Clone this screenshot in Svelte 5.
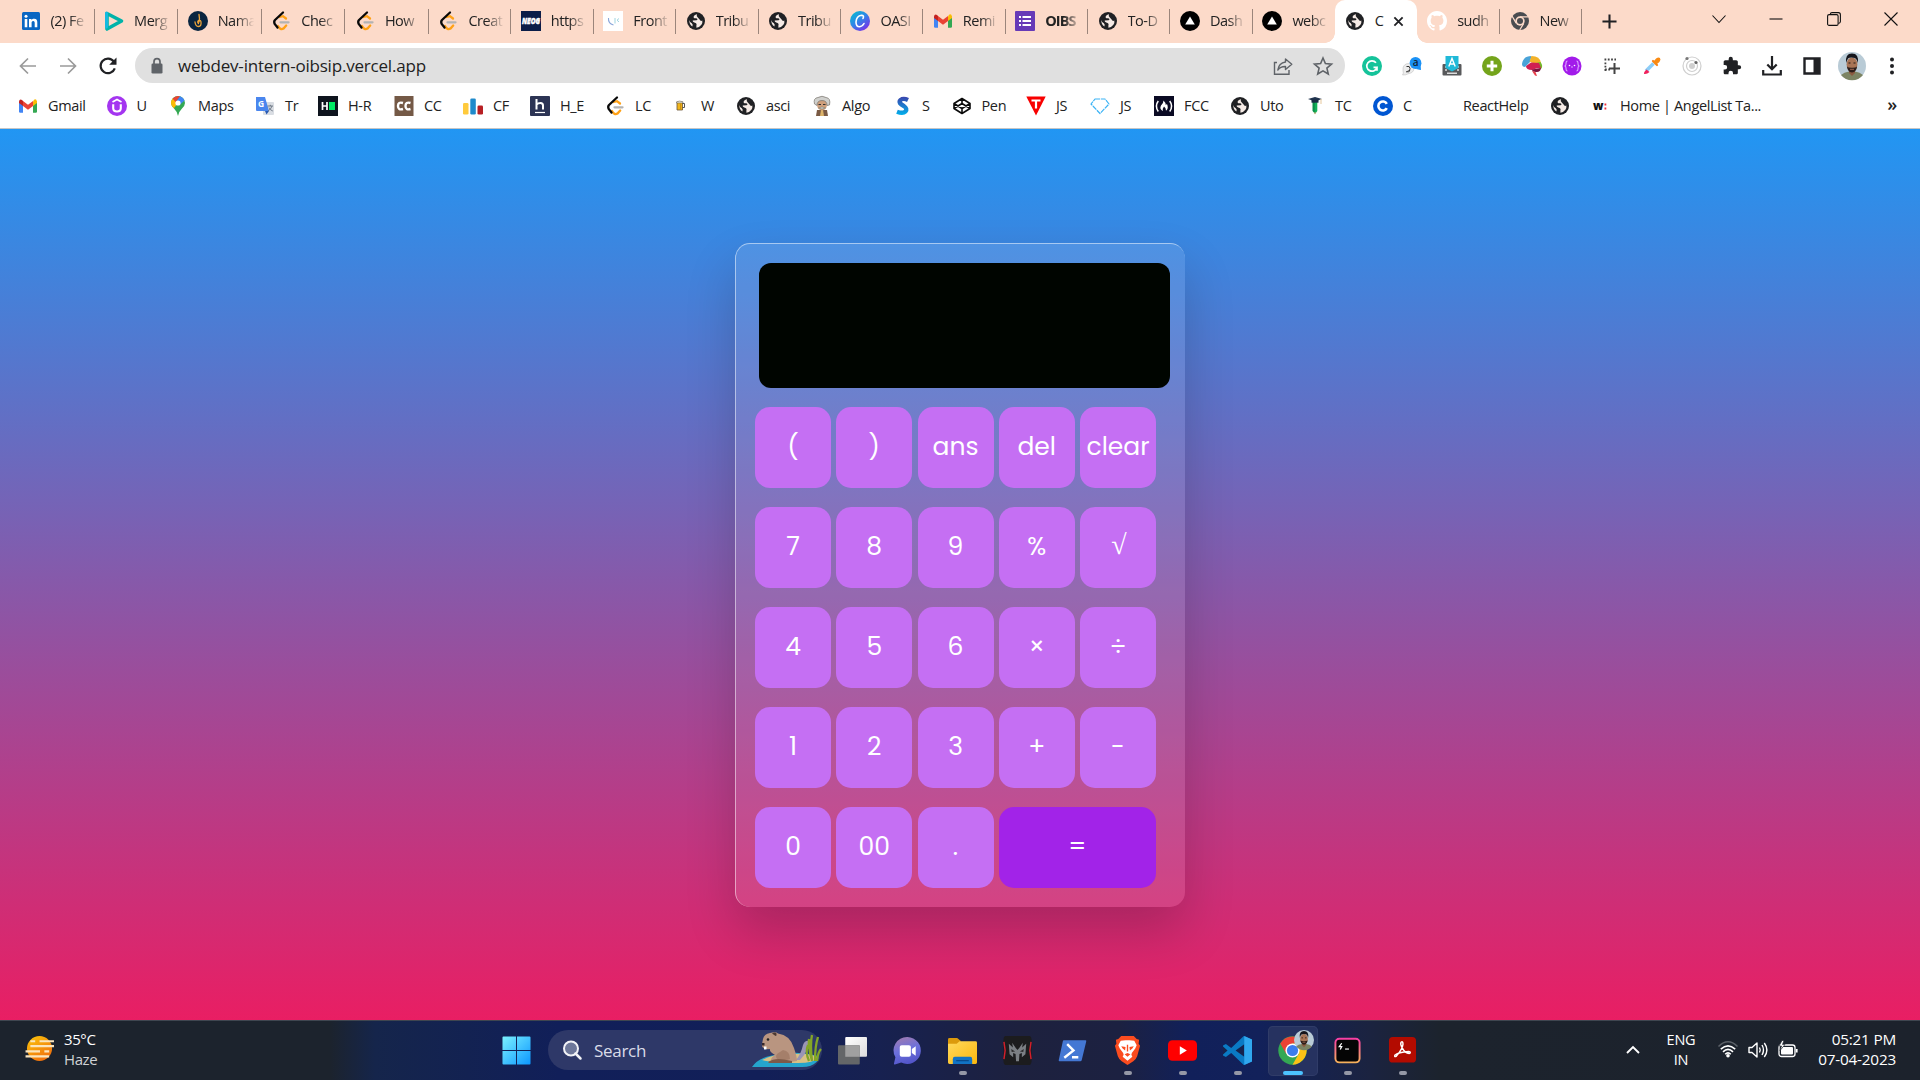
<script>
  const tabs = [
    ['linkedin', '(2) Fe'], ['play', 'Merg'], ['naam', 'Nama'], ['leet', 'Chec'], ['leet', 'How'],
    ['leet', 'Creat'], ['neog', 'https'], ['front', 'Front'], ['globe', 'Tribu'], ['globe', 'Tribu'],
    ['canva', 'OASI'], ['gmail', 'Remi'], ['forms', 'OIBS'], ['globe', 'To-D'], ['vercel', 'Dash'],
    ['vercel', 'webc'], ['globe', 'C'], ['github', 'sudh'], ['chromeMono', 'New']
  ];
  const activeTab = 16;

  // icon, label, width of the whole bookmark slot
  const bookmarks = [
    ['gmail', 'Gmail', 88.5], ['upwork', 'U', 61.5], ['maps', 'Maps', 87], ['translate', 'Tr', 63],
    ['hr', 'H-R', 76], ['cc', 'CC', 69], ['cf', 'CF', 67], ['he', 'H_E', 75], ['leet', 'LC', 66],
    ['beer', 'W', 65], ['globe', 'asci', 76], ['algo', 'Algo', 80], ['scaler', 'S', 59.5],
    ['codepen', 'Pen', 74.5], ['tjs', 'JS', 64], ['gem', 'JS', 64], ['fcc', 'FCC', 76],
    ['globe', 'Uto', 75], ['tc', 'TC', 68], ['coursera', 'C', 60], ['none', 'ReactHelp', 117],
    ['globe', '', 40], ['wf', 'Home | AngelList Ta...', 200]
  ];

  const extensions = [
    'grammarly', 'lang', 'keyboard', 'plusGreen', 'brain', 'braces', 'capture', 'picker',
    'orbit', 'puzzle', 'download', 'panel', 'avatar', 'dots'
  ];

  const keys = [
    '(', ')', 'ans', 'del', 'clear',
    '7', '8', '9', '%', '√',
    '4', '5', '6', '×', '÷',
    '1', '2', '3', '+', '-',
    '0', '00', '.', '='
  ];

  // icon, has running indicator
  const apps = [
    ['taskview', false], ['chat', false], ['folder', true], ['predator', false], ['powershell', false],
    ['brave', true], ['youtube', true], ['vscode', true], ['chrome', true], ['warp', true], ['acrobat', true]
  ];

  let display = $state('');
  function press(k) {
    if (k === 'clear') display = '';
    else if (k === 'del') display = display.slice(0, -1);
    else if (k !== '=' && k !== 'ans') display += k;
  }
</script>

{#snippet face()}
  <circle cx="14" cy="14" r="14" fill="#b9cbd6" />
  <path d="M3 23 Q6 20 11 19.5 H17 Q22 20 25 23 A14 14 0 0 1 3 23Z" fill="#7c8463" />
  <path d="M11 17h6v4l-3 3-3-3z" fill="#8a5a40" />
  <ellipse cx="14" cy="12.5" rx="5.4" ry="7" fill="#a87455" />
  <path d="M8.2 11 Q6.800 1.500 14 1.500 Q21.200 1.500 19.800 11 Q19 7 17 6 Q12 5 10 6.500 Q9 8 8.200 11Z" fill="#15151b" />
  <path d="M9 14.500 Q10.500 16 14 15.800 Q17.500 16 19 14.500 Q18.500 20 14 20.500 Q9.500 20 9 14.500Z" fill="#2c1e1a" />
  <path d="M12 17.300h4" stroke="#9c6450" stroke-width="1" />
  <path d="M10.500 11h2M15.500 11h2" stroke="#221815" stroke-width="1.200" />
{/snippet}

{#snippet icon(name)}
  {#if name === 'linkedin'}
    <svg viewBox="0 0 20 20"><rect x="1" y="1" width="18" height="18" rx="1.500" fill="#0a66c2" /><path d="M3.700 8h2.600v8.300H3.700zM8 8h2.500v1.200c.5-.9 1.500-1.400 2.700-1.400 2.500 0 3.100 1.600 3.100 3.800v4.700h-2.600v-4.200c0-1.100-.2-2.200-1.500-2.200s-1.600 1-1.600 2.100v4.300H8z" fill="#fff" /><circle cx="5" cy="5.200" r="1.500" fill="#fff" /></svg>
  {:else if name === 'play'}
    <svg viewBox="0 0 20 20"><path d="M3 2.500 L17.500 10 L3 18Z" fill="#fcdac9" stroke="#00b3a9" stroke-width="3.600" stroke-linejoin="round" /><path d="M2.500 2v14" stroke="#14b9e0" stroke-width="3" stroke-linecap="round" /></svg>
  {:else if name === 'naam'}
    <svg viewBox="0 0 20 20"><circle cx="10" cy="10" r="10" fill="#0a2540" /><path d="M11 3.500q1 5 0 7.500M7 11q.5 4.500 3.500 4.500T13 11q-.2-2-2.500-1.500Q9 11 10.500 12.500" stroke="#f0a63a" stroke-width="1.300" fill="none" stroke-linecap="round" /></svg>
  {:else if name === 'leet'}
    <svg viewBox="0 0 20 20"><g fill="none" stroke-linecap="round" stroke-width="2.300"><path d="M8.500 6 L12 5.200 L15 7.500M7 15 Q9.500 19.500 12.500 17.500 L15.200 14.500" stroke="#ffa116" /><path d="M9.500 11.300h8" stroke="#b3b3b3" /><path d="M12 1.500 L4 9 Q2.600 10.500 3.700 13 L6.500 16.500" stroke="#090909" /></g></svg>
  {:else if name === 'neog'}
    <svg viewBox="0 0 20 20"><rect width="20" height="20" fill="#0b1d48" /><text x="10" y="13.300" text-anchor="middle" textLength="18" font-size="9" font-weight="900" font-style="italic" fill="#fff" stroke="#fff" stroke-width=".5" lengthAdjust="spacingAndGlyphs">NEOG</text></svg>
  {:else if name === 'front'}
    <svg viewBox="0 0 20 20"><rect width="20" height="20" fill="#fff" /><path d="M5.500 7q-.5 5.500 5 7" stroke="#8aa6da" stroke-width="1.100" fill="none" /><path d="M12 12.500V7M16 7.500l-2 1.700 2 1.700" stroke="#9fd4e0" stroke-width="1" fill="none" /></svg>
  {:else if name === 'globe'}
    <svg viewBox="0 0 20 20"><circle cx="10" cy="10" r="9" fill="#202124" /><path d="M11 3.200 Q7.500 4 7.600 6.400 Q8.300 7.600 10.300 7.200 Q12.500 8.200 10.600 9.300 L6.700 9.600 Q6.600 11.600 9.600 12 Q11.200 12.700 10.400 14.200 L10.400 16.700 Q13.500 16.500 15.400 13.800 Q16.800 11.600 16.300 9.600 Q14.500 10.500 13.600 8.500 L11.600 6.300 Q10.200 5 11 3.200Z M3.400 9 Q3 13 6.300 15.500 Q7.400 13.600 5.800 12.300 Q3.700 11.200 3.400 9Z" fill="#f6ebe6" /></svg>
  {:else if name === 'canva'}
    <svg viewBox="0 0 20 20"><defs><linearGradient id="cv" x1="0" y1="0" x2=".8" y2="1"><stop stop-color="#00c4cc" /><stop offset=".5" stop-color="#2f86e8" /><stop offset="1" stop-color="#7d2ae8" /></linearGradient></defs><circle cx="10" cy="10" r="10" fill="url(#cv)" /><path d="M13 7.500Q14.500 4.300 11.500 4.300Q6.500 5 6 11Q6 15.700 9.500 15.700Q12.500 15.400 14 12.500" stroke="#fff" stroke-width="1.600" fill="none" stroke-linecap="round" /></svg>
  {:else if name === 'gmail'}
    <svg viewBox="0 0 20 20"><path d="M1 5v10.500q0 1.200 1.200 1.200H5V9z" fill="#4285f4" /><path d="M19 5v10.500q0 1.200-1.200 1.200H15V9z" fill="#34a853" /><path d="M15 5.500V10l4-3V5.500q-.8-3.200-3-1.700z" fill="#fbbc04" /><path d="M5 10V5l5 3.800L15 5v5l-5 3.800z" fill="#ea4335" /><path d="M1 5.500V7l4 3V5L4 3.900Q1.500 2.500 1 5.500z" fill="#c5221f" /></svg>
  {:else if name === 'forms'}
    <svg viewBox="0 0 20 20"><rect width="20" height="20" rx="1" fill="#673ab7" /><path d="M4 6h2M4 10h2M4 14h2M7.500 6H16M7.500 10H16M7.500 14H16" stroke="#fff" stroke-width="2" /></svg>
  {:else if name === 'vercel'}
    <svg viewBox="0 0 20 20"><circle cx="10" cy="10" r="10" fill="#000" /><path d="M10 5.500 L14.800 13.600H5.200Z" fill="#fff" /></svg>
  {:else if name === 'github'}
    <svg viewBox="0 0 16 16"><path fill="#fff" d="M8 0C3.580 0 0 3.580 0 8c0 3.540 2.290 6.530 5.470 7.590.4.070.55-.17.55-.38 0-.19-.01-.82-.01-1.490-2.010.37-2.530-.49-2.690-.94-.09-.23-.48-.94-.82-1.130-.28-.15-.68-.52-.01-.53.63-.01 1.080.58 1.230.82.72 1.210 1.870.87 2.330.66.07-.52.28-.87.51-1.070-1.780-.2-3.640-.89-3.640-3.950 0-.87.31-1.590.82-2.150-.08-.2-.36-1.020.08-2.120 0 0 .67-.21 2.200.82.64-.18 1.320-.27 2-.27s1.360.09 2 .27c1.530-1.040 2.200-.82 2.200-.82.44 1.100.16 1.920.08 2.120.51.56.82 1.270.82 2.150 0 3.070-1.870 3.750-3.650 3.950.29.25.54.73.54 1.480 0 1.070-.01 1.930-.01 2.200 0 .21.15.46.55.38A8.010 8.010 0 0 0 16 8c0-4.420-3.580-8-8-8z" /></svg>
  {:else if name === 'chromeMono'}
    <svg viewBox="0 0 20 20"><circle cx="10" cy="10" r="9" fill="#4a4c50" /><circle cx="10" cy="10" r="4.700" fill="#fcdac9" /><circle cx="10" cy="10" r="3" fill="#4a4c50" /><path d="M10 5.800h8.300M6.200 12.100 2 5M13.700 12.300 9.700 19" stroke="#fcdac9" stroke-width="1.300" /></svg>
  {:else if name === 'upwork'}
    <svg viewBox="0 0 20 20"><circle cx="10" cy="10" r="10" fill="#a435f0" /><path d="M6.200 8.300v4Q6.200 15.500 10 15.500T13.800 12.300V8.300" stroke="#fff" stroke-width="2.100" fill="none" /><path d="M5.500 6 L10 3.500 L14.500 6" stroke="#fff" stroke-width="1.700" fill="none" /></svg>
  {:else if name === 'maps'}
    <svg viewBox="0 0 20 20"><path d="M10 20Q9.200 15.500 6 12.500Q3 9.500 3 7A7 7 0 0 1 17 7Q17 9.500 14 12.500Q10.800 15.500 10 20Z" fill="#34a853" /><path d="M4.500 10.800Q3 9 3 7Q3 4.500 4.700 2.500L10 7L5.800 12.300Z" fill="#fbbc04" /><path d="M4.600 2.600Q8 -1 12.200.4L7.500 6Z" fill="#ea4335" /><path d="M12 .3Q15.500 1.500 16.500 4.500L11 9.500L8.500 5Z" fill="#4285f4" /><circle cx="10" cy="7" r="2.600" fill="#fff" /></svg>
  {:else if name === 'translate'}
    <svg viewBox="0 0 20 20"><rect x="8" y="6" width="11" height="13" rx="1" fill="#d9dde3" /><path d="M1 1h9l4 14H2q-1 0-1-1z" fill="#4a86ee" /><path d="M10 15h4l-2.500 3.500z" fill="#2758b0" /><text x="3" y="11" font-size="8.500" font-weight="700" fill="#fff">G</text><path d="M12.500 10h5.500M15.300 8.800v1.200M17 10q-.7 3-4 5M14 11.500q1 2.500 3.800 3.500" stroke="#66727f" fill="none" stroke-width=".9" /></svg>
  {:else if name === 'hr'}
    <svg viewBox="0 0 20 20"><rect width="20" height="20" fill="#0e141e" /><path d="M4.500 6v8M9 6v8M4.500 10H9" stroke="#fff" stroke-width="1.700" /><rect x="11" y="6" width="6" height="8" fill="#00ea64" /></svg>
  {:else if name === 'cc'}
    <svg viewBox="0 0 20 20"><rect x=".5" width="19" height="20" fill="#745946" /><path d="M9 7Q4 5.500 4 10T9 13M16.500 7Q11.500 5.500 11.500 10T16.500 13" stroke="#fff" stroke-width="2.400" fill="none" /></svg>
  {:else if name === 'cf'}
    <svg viewBox="0 0 20 20"><rect y="7" width="5.500" height="11.500" rx="1.300" fill="#ffca3c" /><rect x="7.300" y="2.500" width="5.500" height="16" rx="1.300" fill="#1f8acb" /><rect x="14.500" y="9.500" width="5.500" height="9" rx="1.300" fill="#b71f24" /></svg>
  {:else if name === 'he'}
    <svg viewBox="0 0 20 20"><rect width="20" height="20" rx="1" fill="#2c3454" /><path d="M6.500 3v10.500M6.500 8.700Q8 7 10.500 7T13 9.500V13.500" stroke="#fff" stroke-width="2" fill="none" /><path d="M5 16.500h10" stroke="#fff" stroke-width="1.200" /></svg>
  {:else if name === 'beer'}
    <svg viewBox="0 0 20 20"><path d="M6 6h5.500v8H6z" fill="#f1b61c" stroke="#6d5637" stroke-width=".8" /><path d="M11.500 7.500h2v4h-2" stroke="#555" fill="none" /><path d="M5.500 5.800q3-1.500 6.500 0v1.200h-6.500z" fill="#eee7d0" stroke="#555" stroke-width=".5" /><path d="M9.700 7.500v6" stroke="#c88d12" /></svg>
  {:else if name === 'algo'}
    <svg viewBox="0 0 20 20"><path d="M5 14h10l1 6H4z" fill="#7a5a44" /><path d="M9 14h2l1 6H8z" fill="#ddb46a" /><ellipse cx="10" cy="8.500" rx="5" ry="6" fill="#cf9f7c" /><path d="M2.500 8Q1 2 6 1.500Q10-1 14 1.500Q19 2 17.500 9L15 9.500Q15 4.500 10 4.500T5 9.500Z" fill="#d0d0cd" stroke="#77736c" stroke-width=".7" /><path d="M6.500 8.500h2.500M11 8.500h2.500" stroke="#333" /><path d="M6.500 12Q10 10 13.500 12Q10 14 6.500 12Z" fill="#ddd" stroke="#665" stroke-width=".5" /></svg>
  {:else if name === 'scaler'}
    <svg viewBox="0 0 20 20"><defs><linearGradient id="sc" gradientUnits="userSpaceOnUse" x1="0" y1="1" x2="0" y2="19"><stop stop-color="#3946ae" /><stop offset="1" stop-color="#00b0ec" /></linearGradient></defs><path d="M16 4Q12.500 2.300 9.800 3.200Q6.600 4.500 8 7.100Q9 8.500 11.800 10Q15.800 12.800 13.400 15.400Q11 18 5 15.700" stroke="url(#sc)" stroke-width="4.400" fill="none" /></svg>
  {:else if name === 'codepen'}
    <svg viewBox="0 0 20 20"><path d="M10 2.500 18 7.500V12.500L10 17.500 2 12.500V7.500ZM10 2.500V7.500M10 12.500V17.500M2 7.500 10 12.500 18 7.500M2 12.500 10 7.500 18 12.500" stroke="#0b0b0b" stroke-width="1.600" fill="none" stroke-linejoin="round" /></svg>
  {:else if name === 'tjs'}
    <svg viewBox="0 0 20 20"><path d="M.3.500H19.700L10 19.500Z" fill="#f80000" /><path d="M5.500 4.500h9M10 4.500V12.500" stroke="#fff" stroke-width="2.200" /></svg>
  {:else if name === 'gem'}
    <svg viewBox="0 0 20 20"><path d="M5 3H15L19 8 10 17.500 1 8Z" stroke="#3bb3f5" stroke-width="1.200" fill="none" stroke-linejoin="round" stroke-dasharray="5 .8" /></svg>
  {:else if name === 'fcc'}
    <svg viewBox="0 0 20 20"><rect width="20" height="20" fill="#0a0a23" /><path d="M4.300 5Q.5 10 4.300 15.500M15.700 5Q19.500 10 15.700 15.500" stroke="#fff" stroke-width="1.500" fill="none" /><path d="M9.500 4.500Q12 7 11.800 9L13 8Q15 12.500 12 14.800Q12 12 10 10.500Q8 13 9 15Q5 13 7 9.500Q9.500 7.500 9.500 4.500Z" fill="#fff" /></svg>
  {:else if name === 'tc'}
    <svg viewBox="0 0 20 20"><path d="M7.700 6h4.600v9l-2.300 3-2.300-3z" fill="#12b259" /><path d="M7.700 6h2v10.500l-2-1.500z" fill="#0c8c49" /><path d="M9 16.500h2L10 18.500z" fill="#e2a26e" /><path d="M3 3 10 1 17 3 10 5.500Z" fill="#20344f" /><path d="M6.500 3.500h7v3.200h-7z" fill="#1a2c44" /><path d="M16 3v5" stroke="#e6c79b" /></svg>
  {:else if name === 'coursera'}
    <svg viewBox="0 0 20 20"><circle cx="10" cy="10" r="10" fill="#0056d2" /><path d="M13.800 7.800A4.500 4.500 0 1 0 13.800 12.200" stroke="#fff" stroke-width="2.600" fill="none" /></svg>
  {:else if name === 'wf'}
    <svg viewBox="0 0 20 20"><text x="3" y="13.500" font-size="11.500" font-weight="800" fill="#111">w</text><path d="M14.500 7.500h1.800v2h-1.800zM14.500 11.500h1.800v2h-1.800z" fill="#ec2e3a" /></svg>
  {:else if name === 'grammarly'}
    <svg viewBox="0 0 20 20"><circle cx="10" cy="10" r="10" fill="#15c39a" /><path d="M14 6.700A5.200 5.200 0 1 0 15 11.300H11.500M15 11v3.800" stroke="#fff" stroke-width="1.700" fill="none" /></svg>
  {:else if name === 'lang'}
    <svg viewBox="0 0 20 20"><path d="M1 12a5.500 5 0 1 1 6 5.500Q3 19.500.5 19Q2 17 1 15z" fill="#ececec" stroke="#aaa" stroke-width=".4" /><path d="M4.500 10.500Q8 9.500 8 12.500T6 16.500M7.500 14.500 4 16" stroke="#333" stroke-width="1" fill="none" /><circle cx="13.500" cy="7" r="5.900" fill="#1a91f5" /><path d="M14 13Q18 14 19 14Q18 10 19.500 7z" fill="#1a91f5" /><text x="10.700" y="10.300" font-size="10" font-weight="600" fill="#123">a</text></svg>
  {:else if name === 'keyboard'}
    <svg viewBox="0 0 20 20"><rect x=".5" y="8" width="19" height="11.500" rx="1" fill="#58595b" /><path d="M3 11h2M3 14h2M15 11h2M15 14h2M5 17.300h10" stroke="#ddd" stroke-width="1.500" /><path d="M3.500 0h13v12L10 15.500 3.500 12Z" fill="#20b9d8" /><path d="M6.800 10.500 10 2.500l3.200 8M8 8h4" stroke="#fff" stroke-width="1.400" fill="none" /></svg>
  {:else if name === 'plusGreen'}
    <svg viewBox="0 0 20 20"><circle cx="10" cy="10" r="10" fill="#74a41b" /><path d="M10 4.800v10.400M4.800 10h10.400" stroke="#fff" stroke-width="3" /></svg>
  {:else if name === 'brain'}
    <svg viewBox="0 0 20 20"><path d="M0 8Q1 0 9.500 0L8 6 3 11Q0 11 0 8Z" fill="#4aa3d8" /><path d="M9.500 0Q18 0 19 7L13 8 7.500 5.500Z" fill="#f3b229" /><path d="M18.500 6Q21.500 10 19 13L14 11 14 7Z" fill="#74b82a" /><path d="M4 10 9 6.500 17 7 19 12Q14 12 10 14Q4 14 4 10Z" fill="#d01f52" /><path d="M10 13.500 19 12Q18.500 16.500 14 16Q10 16 10 13.500Z" fill="#7d123d" /><path d="M10 15 13.500 16 15 20 13 19.500Z" fill="#e8404a" /></svg>
  {:else if name === 'braces'}
    <svg viewBox="0 0 20 20"><circle cx="10" cy="10" r="9.500" fill="#a21bea" /><path d="M5.500 5q-1.500 0-1.500 2.500T2.500 10q1.500 0 1.500 2.500T5.500 15M14.500 5q1.500 0 1.500 2.500T17.500 10q-1.500 0-1.500 2.500T14.500 15M9 11h2" stroke="#dca5ff" stroke-width="1.100" fill="none" /><circle cx="7.500" cy="9.500" r=".8" fill="#fff" /><circle cx="12.500" cy="9.500" r=".8" fill="#fff" /></svg>
  {:else if name === 'capture'}
    <svg viewBox="0 0 20 20"><path d="M2.500 3.500h11.500M3.400 6.500v9M3 13.500h5" stroke="#444" stroke-width="1.800" stroke-dasharray="1.800 1.500" fill="none" /><path d="M12.500 7v11M7 12.500h11" stroke="#444" stroke-width="2" /></svg>
  {:else if name === 'picker'}
    <svg viewBox="0 0 20 20"><path d="M4 15 11.500 7.500" stroke="#8ccdf7" stroke-width="3.600" /><path d="M2 18Q2 15.500 4.500 13.500L7.500 16Q5 18.500 2 18Z" fill="#f0205b" /><path d="M11 5 15 9" stroke="#f78318" stroke-width="2.200" stroke-linecap="round" /><path d="M12 6 14.500 3Q16.500 1.500 17.500 2.500T17 5.500L14 8Z" stroke="#f98a12" stroke-width="1.200" fill="#f98a12" /></svg>
  {:else if name === 'orbit'}
    <svg viewBox="0 0 20 20"><g fill="none" stroke="#cfcfcf" stroke-width="1.200"><circle cx="10" cy="10" r="9" /><circle cx="10" cy="10" r="5.500" /></g><circle cx="10" cy="10" r="3" fill="#d0d0d0" /><circle cx="5" cy="2.500" r="1.600" fill="#777" /><circle cx="14" cy="6.500" r="1.600" fill="#666" /></svg>
  {:else if name === 'puzzle'}
    <svg viewBox="0 0 24 24"><path fill="#202124" d="M20.500 11H19V7c0-1.100-.9-2-2-2h-4V3.500a2.500 2.500 0 0 0-5 0V5H4c-1.100 0-2 .9-2 2v3.800h1.500a2.700 2.700 0 0 1 0 5.400H2V20c0 1.100.9 2 2 2h3.800v-1.500a2.700 2.700 0 0 1 5.400 0V22H17c1.100 0 2-.9 2-2v-4h1.500a2.500 2.500 0 0 0 0-5z" /></svg>
  {:else if name === 'download'}
    <svg viewBox="0 0 20 20"><path d="M10 0v13M5.300 8.500 10 13.200l4.700-4.700M1.200 14v4.500h17.600V14" stroke="#202124" stroke-width="2.200" fill="none" /></svg>
  {:else if name === 'panel'}
    <svg viewBox="0 0 20 20"><path d="M2.500 2.500h15v15h-15z" stroke="#202124" stroke-width="2.400" fill="none" /><path d="M11.500 2h6.500v16h-6.500z" fill="#202124" /></svg>
  {:else if name === 'avatar'}
    <svg class="avatar" viewBox="0 0 28 28">{@render face()}</svg>
  {:else if name === 'dots'}
    <svg viewBox="0 0 20 20"><g fill="#202124"><circle cx="10" cy="3.500" r="2" /><circle cx="10" cy="10" r="2" /><circle cx="10" cy="16.500" r="2" /></g></svg>
  {:else if name === 'back'}
    <svg viewBox="0 0 20 20"><path d="M18 10H2.500M10 2.500 2.500 10l7.500 7.500" stroke="#9a9a9a" stroke-width="1.700" fill="none" /></svg>
  {:else if name === 'forward'}
    <svg viewBox="0 0 20 20"><path d="M2 10h15.500M10 2.500l7.500 7.500-7.500 7.500" stroke="#9a9a9a" stroke-width="1.700" fill="none" /></svg>
  {:else if name === 'reload'}
    <svg viewBox="0 0 20 20"><path d="M16.800 12.300A7.300 7.300 0 1 1 15.800 5.500" stroke="#202124" stroke-width="2.200" fill="none" /><path d="M18.500 1.500v7.300h-7.300z" fill="#202124" /></svg>
  {:else if name === 'lock'}
    <svg viewBox="0 0 20 20"><rect x="4.500" y="7.500" width="11" height="10" rx="1.300" fill="#5f6368" /><path d="M7 8V5.700a3 3 0 0 1 6 0V8" stroke="#5f6368" stroke-width="1.700" fill="none" /></svg>
  {:else if name === 'share'}
    <svg viewBox="0 0 20 20"><path d="M4 6.500H1.500V18.300H16V14" stroke="#5f6368" stroke-width="1.400" fill="none" /><path d="M12.500 3 18.800 8.300 12.500 13.500V10.500Q7.500 10.300 4.800 14Q5.800 7 12.500 6Z" stroke="#5f6368" stroke-width="1.400" fill="none" stroke-linejoin="round" /></svg>
  {:else if name === 'star'}
    <svg viewBox="0 0 20 20"><path d="M10 2 12.400 7.600 18.500 8.100 13.900 12.100 15.300 18 10 14.900 4.700 18 6.100 12.100 1.500 8.100 7.600 7.600Z" stroke="#5f6368" stroke-width="1.600" fill="none" /></svg>
  {:else if name === 'taskview'}
    <svg viewBox="0 0 30 30"><defs><linearGradient id="tv" x1="0" y1="0" x2="1" y2="1"><stop stop-color="#fff" /><stop offset="1" stop-color="#dcdcdc" /></linearGradient></defs><rect x="7.500" y="1" width="22.500" height="20.500" rx="1" fill="url(#tv)" /><rect x="0" y="9.500" width="22.500" height="20" rx="1" fill="#646668" /><path d="M7.500 9.500h15v12h-15z" fill="#a0a0a0" /></svg>
  {:else if name === 'chat'}
    <svg viewBox="0 0 30 30"><defs><linearGradient id="ct" x1=".2" y1="0" x2=".5" y2="1"><stop stop-color="#a07bb0" /><stop offset=".5" stop-color="#6b70dc" /><stop offset="1" stop-color="#5254c8" /></linearGradient></defs><path d="M15 1a14 14 0 1 1-6.500 26.500L2 29.500Q.8 29.700 1 28.500L2.500 22A14 14 0 0 1 15 1Z" fill="url(#ct)" /><rect x="7" y="9.500" width="11.500" height="12" rx="2" fill="#fff" /><path d="M19.500 13.500 23.500 10.500V20.500L19.500 17.500Z" fill="#fff" /></svg>
  {:else if name === 'folder'}
    <svg viewBox="0 0 30 30"><defs><linearGradient id="fo" x1="0" y1="0" x2="1" y2="1"><stop stop-color="#ffd95d" /><stop offset="1" stop-color="#fbb70d" /></linearGradient></defs><path d="M0 3.500Q0 2 1.500 2H9.500L13 5V10H0Z" fill="#dc9a0c" /><path d="M0 8H9L12 5.500H28.500Q30 5.500 30 7V27.500Q30 29 28.500 29H1.500Q0 29 0 27.500Z" fill="url(#fo)" /><path d="M5 29V24Q5 21.500 7 21.500H23Q25 21.500 25 24V29Z" fill="#1273c4" /><path d="M8.500 25.500h13" stroke="#084989" stroke-width="1.200" /></svg>
  {:else if name === 'predator'}
    <svg viewBox="0 0 30 30"><path d="M2 0H28Q30 2 29.500 6V24Q30 28 28 30H2Q0 28 .5 24V6Q0 2 2 0Z" fill="#1c1c1e" /><path d="M1 6 2.200 15 1 24M29 6 27.800 15 29 24" stroke="#d21f2b" stroke-width="1.500" fill="none" /><path d="M13.200 12.500 9.500 7 10.200 12 6 8 6.800 19 10.500 22 10.500 17.500 13 18.500 13.500 26H16.500L17 18.500 19.500 17.500 19.500 22 23.200 19 24 8 19.800 12 20.500 7 16.800 12.500 15 14.500Z" fill="#7b7f84" /><path d="M8.500 13.500 12.500 16 9 16.500ZM21.500 13.500 17.500 16 21 16.500Z" fill="#2c2c2e" /></svg>
  {:else if name === 'powershell'}
    <svg viewBox="0 0 30 30"><path d="M6 4.500H28.500Q29.500 4.500 29.200 5.800L24.500 25Q24.200 26 23 26H1.500Q.5 26 .8 24.700L5 5.500Q5.200 4.500 6 4.500Z" fill="#4478d4" /><path d="M9.500 8.500 16 15 6.500 22.500M14.500 22H21" stroke="#fff" stroke-width="2.500" fill="none" /></svg>
  {:else if name === 'brave'}
    <svg viewBox="0 0 30 30"><path d="M8.500 0H21.500L24.500 3 27 4 26.500 8 28 10 25 21Q24 24 21 26L15 30 9 26Q6 24 5 21L2 10 3.500 8 3 4 5.500 3Z" fill="#fb4c1f" /><path d="M8 5 13 4.500H17L22 5 24.500 9.500 23 13 19.500 17.500 19 19.500 20 21.500 15 25.500 10 21.500 11 19.500 10.500 17.500 7 13 5.500 9.500Z" fill="#fff" /><path d="M8.500 10.500 13 11.500 12.500 15 10 13ZM21.500 10.500 17 11.500 17.500 15 20 13ZM12 19 15 17.500 18 19 15 21.500ZM14.300 9h1.400v7h-1.400z" fill="#fb4c1f" /></svg>
  {:else if name === 'youtube'}
    <svg viewBox="0 0 30 30"><rect x="0" y="4.500" width="30" height="21" rx="4.500" fill="#f00" /><path d="M12.200 10.700 19.500 15 12.200 19.300Z" fill="#fff" /></svg>
  {:else if name === 'vscode'}
    <svg viewBox="0 0 30 30"><path d="M21.500 0 30 3.500V26.500L21.500 30 8.500 17.500 3 21.800 0 20.300V9.700L3 8.200 8.500 12.500Z" fill="#0a7ac4" /><path d="M4.700 15 0 10.800V19.200ZM22 8.500V21.500L13 15Z" fill="#15234d" /><path d="M22 0 30 3.500V26.500L22 30Z" fill="#30a8ef" /></svg>
  {:else if name === 'chrome'}
    <svg viewBox="0 0 30 30"><circle cx="15" cy="15" r="14.700" fill="#34a853" /><path d="M2.300 7.700A14.700 14.700 0 0 1 27.700 7.700H15L8.600 18.700Z" fill="#ea4335" /><path d="M27.700 7.700A14.700 14.700 0 0 1 15 29.700L21.400 18.700 15 7.700Z" fill="#fbc116" /><circle cx="15" cy="15" r="7.300" fill="#fff" /><circle cx="15" cy="15" r="5.800" fill="#3b7ded" /></svg>
  {:else if name === 'warp'}
    <svg viewBox="0 0 30 30"><defs><linearGradient id="wp" x1="0" y1="0" x2="0" y2="1"><stop stop-color="#f83fa5" /><stop offset="1" stop-color="#f6b15c" /></linearGradient></defs><rect x="2.500" y="2.800" width="25" height="24.500" rx="4" fill="#050505" stroke="url(#wp)" stroke-width="2" /><path d="M9 7.500 6.500 11H9L7.500 14" stroke="#fff" stroke-width="1.300" fill="none" /><path d="M12.500 13.500h4" stroke="#fff" stroke-width="1.200" /></svg>
  {:else if name === 'acrobat'}
    <svg viewBox="0 0 30 30"><rect x="1" y="1" width="28" height="26.500" rx="4" fill="#b30b00" /><path d="M13.500 6.500Q15.500 5 15.500 8.500Q15 13.500 8.500 21Q6.500 22 7 20Q10.500 16.500 21.500 16Q24 16.500 22.500 18Q18 18.500 14.500 12Q12.500 8 13.500 6.500Z" stroke="#fff" stroke-width="1.500" fill="none" /></svg>
  {/if}
{/snippet}

<div class="desktop">
  <div class="tabstrip">
    {#each tabs as [ic, label], i}
      <div class="tab" class:wide={i < 5} class:active={i === activeTab} class:nosep={i === activeTab - 1} class:bold={label === 'OIBS'}>
        <span class="fav">{@render icon(ic)}</span>
        <span class="title">{label}</span>
        {#if i === activeTab}
          <svg class="close" viewBox="0 0 12 12"><path d="M1.500 1.500l9 9M10.500 1.500l-9 9" stroke="#202124" stroke-width="2" /></svg>
        {/if}
      </div>
    {/each}
    <div class="newtab"><svg viewBox="0 0 16 16"><path d="M8 .5v15M.5 8h15" stroke="#202124" stroke-width="2.200" /></svg></div>
    <div class="wincontrols">
      <svg viewBox="0 0 14 14"><path d="M.5 3.500 7 10.500l6.500-7" /></svg>
      <svg viewBox="0 0 14 14"><path d="M.5 7h13" /></svg>
      <svg viewBox="0 0 14 14"><rect x=".6" y="2.600" width="10.500" height="10.800" rx="1.500" /><path d="M3.200 2.500Q3.500.6 5 .6H11.500Q13.400.6 13.400 2.800V9.500Q13.400 11 11.500 11.500" /></svg>
      <svg viewBox="0 0 14 14"><path d="M.5.500l13 13M13.500.5l-13 13" /></svg>
    </div>
  </div>

  <div class="toolbar">
    <div class="cell">{@render icon('back')}</div>
    <div class="cell">{@render icon('forward')}</div>
    <div class="cell">{@render icon('reload')}</div>
    <div class="omnibox">
      <span class="lock">{@render icon('lock')}</span>
      <span class="url">webdev-intern-oibsip.vercel.app</span>
      <span class="act">{@render icon('share')}</span>
      <span class="act">{@render icon('star')}</span>
    </div>
    {#each extensions as e}
      <div class="cell">{@render icon(e)}</div>
    {/each}
  </div>

  <div class="bookmarks">
    {#each bookmarks as [ic, label, w]}
      <div class="bm" style="width: {w}px">
        <span class="fav">{@render icon(ic)}</span>
        {#if label}<span>{label}</span>{/if}
      </div>
    {/each}
    <span class="more">»</span>
  </div>

  <main>
    <div class="calculator">
      <div class="screen">{display}</div>
      <div class="keys">
        {#each keys as k}
          <button class:equal={k === '='} class:root={k === '√'} onclick={() => press(k)}>{k}</button>
        {/each}
      </div>
    </div>
  </main>

  <div class="taskbar">
    <div class="weather">
      <svg viewBox="0 0 30 28"><defs><linearGradient id="wx" x1="0" y1="0" x2=".6" y2="1"><stop stop-color="#fcc80b" /><stop offset="1" stop-color="#f0700c" /></linearGradient></defs><circle cx="14.500" cy="14" r="13" fill="url(#wx)" /><path d="M5 6.500h5M14.500 6.500h15M5 11.500h24.500M0 17h15M19.500 17h5M0 22.200h24.500" stroke="#fbe5bd" stroke-width="2.200" /></svg>
      <div><div>35°C</div><div class="dim">Haze</div></div>
    </div>
    <div class="app start">
      <svg viewBox="0 0 30 30"><defs><linearGradient id="wn" gradientUnits="userSpaceOnUse" x1="0" y1="0" x2="30" y2="30"><stop stop-color="#7df3ff" /><stop offset="1" stop-color="#0a95ff" /></linearGradient></defs><path d="M.5 1.500Q.5.500 1.500.5H14.500V14.500H.5ZM15.500.5H28.500Q29.500.5 29.500 1.500V14.500H15.500ZM.5 15.500H14.500V29.500H1.500Q.5 29.500.5 28.500ZM15.500 15.500H29.500V28.500Q29.500 29.500 28.500 29.500H15.500Z" fill="url(#wn)" /></svg>
    </div>
    <div class="search">
      <svg class="mag" viewBox="0 0 20 20"><circle cx="9" cy="8.500" r="7" fill="#6d779a" stroke="#f2f3f7" stroke-width="2" /><path d="M13.500 13.500l5 5" stroke="#f2f3f7" stroke-width="2.500" stroke-linecap="round" /></svg>
      <span>Search</span>
      <svg class="beaver" viewBox="0 0 70 36">
        <path d="M0 35Q6 26 20 23.500Q45 18 66 24Q68 30 58 34Q55 35 50 35Z" fill="#25a5cd" />
        <path d="M10 28Q22 21 42 22Q60 21 66 26Q62 31 46 31Q20 31 10 28Z" fill="#d8c084" />
        <path d="M44 28Q49 22 51 13Q53 8 57 9Q58 17 48 28Z" fill="#9a95b5" />
        <path d="M11 7Q12 2 18 1Q24-.5 26 1.500Q38 3 42 16Q45 25 45 29L38 30H20Q17 27 23 23Q17 20 18 17Q9 18 10 12Z" fill="#b99580" />
        <path d="M28 20Q22 23 25 27Q34 29 38 27Q38 19 31 18Z" fill="#a57f6a" />
        <path d="M16 30Q22 26 32 27.500L40 29 40 31H17Z" fill="#7d5a48" />
        <circle cx="16" cy="7.500" r="1.300" fill="#222" /><path d="M10 11h2.500v2.500H10z" fill="#36272a" /><path d="M12 14.500h2.500v3H12z" fill="#fff" /><path d="M20 1.500Q23-.5 24.500 1.500Q25 4 23.500 4Z" fill="#4d3932" />
        <path d="M57 29Q53 20 56 13M60 29Q58 12 60 3M63 29Q63 14 66 5M65 29Q66 20 69 17M60 29Q56 15 57 7" stroke="#83a526" stroke-width="2.300" fill="none" />
      </svg>
    </div>
    <div class="apps">
      {#each apps as [ic, run]}
        <div class="app" class:current={ic === 'chrome'}>
          {@render icon(ic)}
          {#if ic === 'chrome'}<svg class="badge" viewBox="0 0 28 28">{@render face()}</svg>{/if}
          {#if run}<i></i>{/if}
        </div>
      {/each}
    </div>
    <div class="tray">
      <svg class="chev" viewBox="0 0 14 14"><path d="M1 10l6-6 6 6" stroke="#fff" stroke-width="1.900" fill="none" /></svg>
      <div class="lang">ENG<br />IN</div>
      <svg class="sys" viewBox="0 0 20 20"><g fill="none" stroke="#fff" stroke-width="1.600"><path d="M.5 6.500Q10-3 19.500 6.500" stroke="#5b6168" /><path d="M2.800 9.200Q10 2.500 17.200 9.200M5 11.800Q10 7 15 11.800M7.200 14.300Q10 11.500 12.800 14.300" /></g><circle cx="10" cy="15.700" r="1.800" fill="#fff" /></svg>
      <svg class="sys" viewBox="0 0 20 20"><g fill="none" stroke="#fff" stroke-width="1.400" stroke-linejoin="round"><path d="M1 7.500H4L9 3V17L4 12.500H1Z" /><path d="M11.500 7.500Q13 10 11.500 12.500M14 5Q17 10 14 15M16.300 3Q21.500 10 16.300 17" /></g></svg>
      <svg class="sys" viewBox="0 0 20 20"><rect x="1" y="5" width="16" height="11.500" rx="2.500" fill="none" stroke="#fff" stroke-width="1.300" /><rect x="3" y="7" width="12" height="7.500" rx="1" fill="#fff" /><path d="M18.700 9v3.500" stroke="#fff" stroke-width="1.800" /><path d="M4 .5 1 6H3.500L2 10.500 7 4.500H4.500L6 .5Z" fill="#fff" stroke="#1c222c" stroke-width=".7" /></svg>
      <div class="clock">05:21 PM<br />07-04-2023</div>
    </div>
  </div>
</div>

<style>
  :global(body) { margin: 0; overflow: hidden; }
  .desktop {
    width: 1920px; height: 1080px; display: flex; flex-direction: column; overflow: hidden;
    font-family: "Open Sans", "Noto Sans", sans-serif; font-size: 14.5px; color: #222;
  }
  svg { display: block; overflow: visible; }

  .tabstrip { height: 43px; background: #fcdac9; display: flex; padding-left: 10.5px; box-sizing: border-box; }
  .tab {
    position: relative; width: 82.4px; flex: none; box-sizing: border-box; display: flex; align-items: center;
    padding: 0 6px 1px 10px; gap: 10px;
  }
  .tab.wide { width: 83.6px; }
  .tab::after { content: ""; position: absolute; right: -.5px; top: 9px; width: 1px; height: 25px; background: #9b857b; }
  .tab.active::after, .tab.nosep::after { display: none; }
  .fav { width: 20px; height: 20px; flex: none; }
  .title {
    flex: 1; min-width: 0; overflow: hidden; white-space: nowrap; letter-spacing: -.5px; padding-bottom: 2px;
    mask-image: linear-gradient(90deg, #000 50%, transparent 98%);
  }
  .bold .title { font-weight: 700; letter-spacing: -.9px; }
  .active { background: #fff; border-radius: 10px 10px 0 0; }
  .active .title { mask-image: none; flex: none; width: 9px; }
  .active::before {
    content: ""; position: absolute; left: -10px; right: -10px; bottom: 0; height: 10px;
    background: radial-gradient(circle at 0 0, transparent 9.5px, #fff 10px) left / 10px 10px no-repeat,
      radial-gradient(circle at 100% 0, transparent 9.5px, #fff 10px) right / 10px 10px no-repeat;
  }
  .close { width: 11px; height: 11px; margin-left: -1px; }
  .newtab { width: 56px; display: grid; place-items: center; }
  .newtab svg { width: 15px; height: 15px; }
  .wincontrols { margin-left: auto; display: flex; padding-bottom: 5px; align-items: center; gap: 43.3px; padding-right: 22px; }
  .wincontrols svg { width: 14px; height: 14px; fill: none; stroke: #111; stroke-width: 1.1; }

  .toolbar { height: 45px; background: #fff; display: flex; align-items: center; padding: 0 8px 0 8px; box-sizing: border-box; }
  .cell { width: 40px; flex: none; display: grid; place-items: center; }
  .cell :global(svg) { width: 20px; height: 20px; }
  .cell .avatar { width: 28px; height: 28px; }
  .omnibox {
    flex: 1; height: 35px; margin: 0 7px 0 7px; border-radius: 18px; background: #e0e0e0;
    display: flex; align-items: center; padding: 0 12px 0 12px; box-sizing: border-box;
  }
  .lock { width: 20px; height: 20px; }
  .url { flex: 1; margin-left: 11px; font-size: 17px; letter-spacing: -.2px; }
  .act { width: 20px; height: 20px; margin-left: 20px; }

  .bookmarks {
    height: 41px; background: #fff; border-bottom: 1px solid #c5c5c5; box-sizing: border-box;
    display: flex; align-items: center; padding: 0 23px 5px 18px; letter-spacing: -.35px; white-space: nowrap;
  }
  .bm { display: flex; align-items: center; gap: 10px; flex: none; }
  .more { margin: 0 0 4px auto; font-weight: 600; font-size: 18px; }

  main {
    height: 891px; display: grid; justify-items: center; align-items: start; padding-top: 114px;
    box-sizing: border-box; background: linear-gradient(#2196f3, #e91e63);
  }
  .calculator {
    width: 450px; height: 664px; box-sizing: border-box; border-radius: 15px; padding: 19px;
    background: rgba(255, 255, 255, .1);
    border-top: 1px solid rgba(255, 255, 255, .5); border-left: 1px solid rgba(255, 255, 255, .5);
    box-shadow: 0 25px 50px rgba(0, 0, 0, .18);
  }
  .screen {
    height: 125px; width: 411px; box-sizing: border-box; margin: 0 0 19px 4px; border-radius: 12px; background: #000500;
    color: #fff; font-size: 30px; padding: 40px 20px; text-align: right;
  }
  .keys { display: grid; grid-template-columns: repeat(5, 76px); gap: 19px 5.25px; }
  button {
    height: 81px; border: 0; border-radius: 15px; background: #c56ff3; color: #fff; padding: 0 0 2px;
    font: 400 25px "Poppins", "Inter", sans-serif; white-space: nowrap;
  }
  .root { font-family: "Liberation Serif", serif; font-size: 28px; padding: 0 0 5px 2px; }
  .equal { grid-column: span 2; background: #a223e8; }

  .taskbar {
    height: 60px; display: flex; align-items: center; color: #fff; font-size: 15px; letter-spacing: -.2px;
    box-sizing: border-box; border-top: 1px solid #3f4650;
    background: linear-gradient(90deg, #1c232d 0, #1c232d 330px, #15254b 375px, #111f59 560px, #121f58 760px,
      #172150 880px, #1d213e 1020px, #1c2141 1120px, #11205a 1190px, #12215a 1260px, #1b2340 1370px, #1c232d 1440px, #1c222c 1920px);
  }
  .weather { width: 489px; flex: none; display: flex; align-items: center; gap: 9px; padding: 0 0 4px 25px; box-sizing: border-box; line-height: 20px; letter-spacing: -.4px; }
  .weather svg { width: 30px; height: 27px; margin-bottom: 1px; }
  .dim { color: #d0d2d5; }
  .app { position: relative; width: 55px; height: 58px; display: grid; place-items: center; flex: none; }
  .app :global(svg) { width: 29px; height: 29px; }
  .search {
    width: 274px; height: 40px; margin: 0 3px 1px 4px; border-radius: 20px; background: #2e3868; flex: none;
    display: flex; align-items: center; box-sizing: border-box; padding-left: 14px; color: #dadce8; font-size: 17px; letter-spacing: -.3px;
  }
  .mag { width: 20px; height: 20px; margin-right: 12px; }
  .beaver { width: 70px; height: 36px; margin-left: auto; }
  .apps { display: flex; }
  .app i { position: absolute; bottom: 5px; left: 50%; width: 8px; height: 4px; margin-left: -4px; border-radius: 2px; background: #9598a6; }
  .current { z-index: 0; }
  .current::before {
    content: ""; position: absolute; z-index: -1; inset: 4px 2.5px; border-radius: 5px;
    background: #263260; box-shadow: inset 0 0 0 1px #303c68;
  }
  .app.current i { width: 20px; margin-left: -10px; background: #4cc2ff; }
  .app .badge { position: absolute; width: 20px; height: 20px; right: 6px; top: 8px; }
  .tray { margin-left: auto; display: flex; align-items: center; padding: 0 24px 2px 0; line-height: 20px; }
  .chev { width: 14px; height: 14px; margin-right: 26px; }
  .lang { width: 30px; text-align: center; margin-right: 22px; font-size: 14.5px; }
  .sys { width: 20px; height: 20px; margin-right: 10px; }
  .clock { width: 88px; text-align: right; white-space: nowrap; font-size: 15.3px; padding-bottom: 2px; }
</style>
